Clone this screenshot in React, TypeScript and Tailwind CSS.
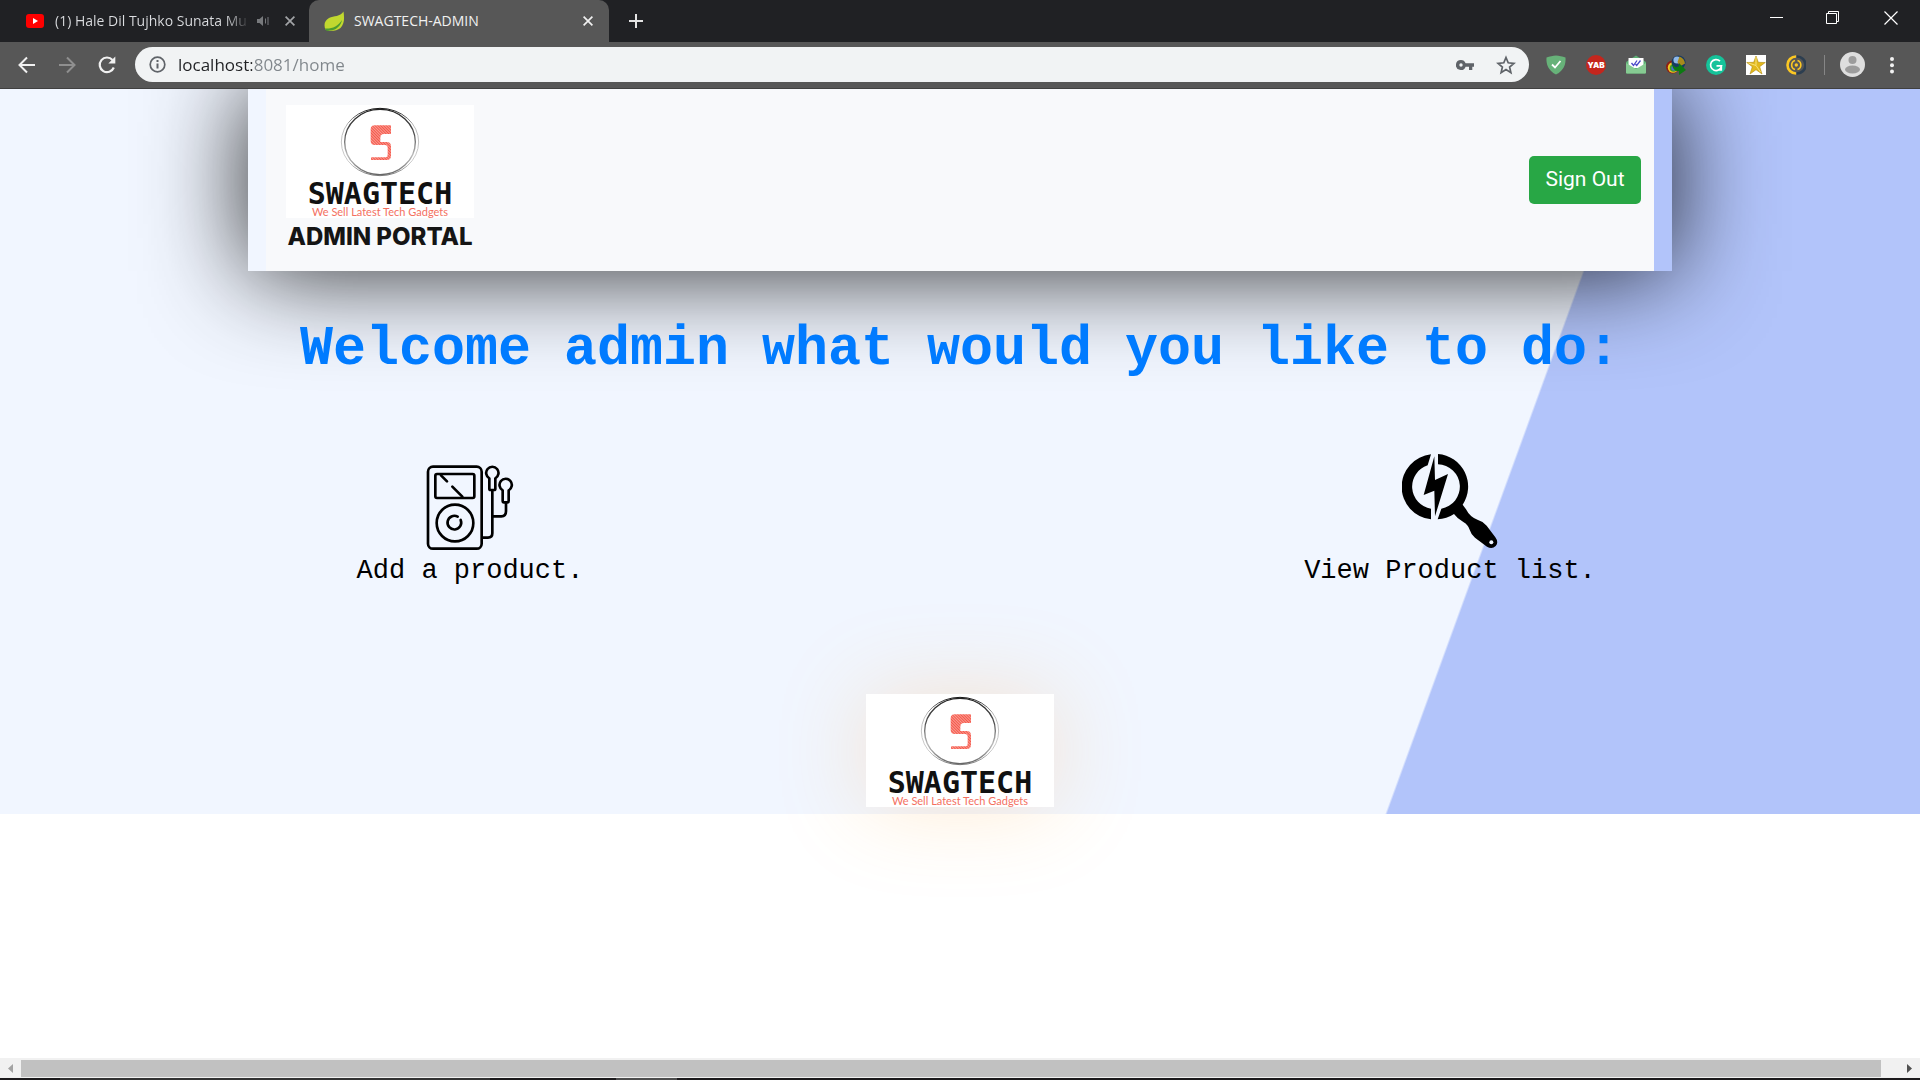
import React from "react";

function CloseIcon({ size = 10 }: { size?: number }) {
  return (
    <svg width={size} height={size} viewBox="0 0 10 10" fill="none" stroke="currentColor" strokeWidth="1.7">
      <path d="M0.6 0.6 9.4 9.4M9.4 0.6 0.6 9.4" />
    </svg>
  );
}

function TabStrip() {
  return (
    <div className="flex h-[42px] bg-[#202124] pb-px font-['Open_Sans',sans-serif] text-sm">
      <div className="flex w-[309px] items-center pl-[26px] pr-[14px]">
        <svg width="18" height="14" viewBox="0 0 18 14" className="shrink-0">
          <rect width="18" height="14" rx="3" fill="#f00" />
          <path d="M7 4v6l5-3z" fill="#fff" />
        </svg>
        <button className="ml-[11px] w-[191px] overflow-hidden whitespace-nowrap bg-[linear-gradient(90deg,#dcdee1_170px,#202124_195px)] bg-clip-text text-left text-transparent">
          (1) Hale Dil Tujhko Sunata Mu
        </button>
        <button aria-label="Mute tab" className="ml-[11px] text-[#77797c]">
          <svg width="12" height="12" viewBox="0 0 12 12" fill="none" stroke="currentColor">
            <path d="M0 4h2.5L6 1v10L2.500 8H0z" fill="currentColor" stroke="none" />
            <path d="M8.500 3.500v5M11 2v8" />
          </svg>
        </button>
        <button aria-label="Close tab" className="ml-auto text-[#a2a4a7]">
          <CloseIcon />
        </button>
      </div>
      <div className="-mb-px flex w-[300px] items-center rounded-t-[10px] bg-[#575757] pl-[15px] pr-4 text-[#f1f1f1]">
        <svg width="21" height="21" viewBox="0 0 21 21" className="shrink-0">
          <path d="M19.500 0.500C20.500 7 20.500 13 16.500 17 12 20.500 5 20.500 1.500 18.500-0.500 14 0.500 9.500 5 7 10 4.500 16 6 19.500 0.500Z" fill="#c1d82f" />
          <path d="M1 17.500C8 18 14 15.500 18 9 17 14.500 12.500 19.500 5 19.500 3.500 20.500 1.500 19.500 1 17.500Z" fill="#4c9c2e" />
        </svg>
        <button className="ml-[9px]">SWAGTECH-ADMIN</button>
        <button aria-label="Close tab" className="ml-auto">
          <CloseIcon />
        </button>
      </div>
      <button aria-label="New tab" className="ml-5 text-[#e4e4e4]">
        <svg width="14" height="14" viewBox="0 0 14 14" stroke="currentColor" strokeWidth="2">
          <path d="M7 0v14M0 7h14" />
        </svg>
      </button>
      <div className="ml-auto flex h-9 items-center pr-[22px] text-white">
        <button aria-label="Minimize" className="mr-[43px]">
          <svg width="13" height="13" viewBox="0 0 13 13" stroke="currentColor"><path d="M0 5.500h13" /></svg>
        </button>
        <button aria-label="Restore" className="mr-[44px]">
          <svg width="14" height="14" viewBox="0 0 14 14" fill="none" stroke="currentColor">
            <path d="M0.500 2.500h10v10h-10zM2.500 2.500v-2h10v10h-2" />
          </svg>
        </button>
        <button aria-label="Close window">
          <svg width="14" height="14" viewBox="0 0 14 14" stroke="currentColor" strokeWidth="1.200">
            <path d="M0.500 0.500l13 13M13.500 0.500l-13 13" />
          </svg>
        </button>
      </div>
    </div>
  );
}

function Extension({ label, children }: { label: string; children: React.ReactNode }) {
  return (
    <button aria-label={label}>
      <svg width="20" height="20" viewBox="0 0 20 20">{children}</svg>
    </button>
  );
}

function Toolbar() {
  return (
    <div className="flex h-[47px] items-center border-b border-[#404040] bg-[#575757] pb-px pl-[17px] pr-[18px]">
      <div className="flex w-[118px] shrink-0 items-center gap-5 text-[#f1f1f1]">
        <button aria-label="Back">
          <svg width="20" height="20" viewBox="0 0 20 20" fill="none" stroke="currentColor" strokeWidth="2">
            <path d="M18 10H3M10 2.500 2.500 10l7.500 7.500" />
          </svg>
        </button>
        <button aria-label="Forward" className="text-[#8f8f8f]">
          <svg width="20" height="20" viewBox="0 0 20 20" fill="none" stroke="currentColor" strokeWidth="2">
            <path d="M2 10h15M10 2.500l7.500 7.500-7.500 7.500" />
          </svg>
        </button>
        <button aria-label="Reload">
          <svg width="20" height="20" viewBox="0 0 20 20" fill="none" stroke="currentColor" strokeWidth="2.200">
            <path d="M16.800 12.500A7.300 7.300 0 1 1 15.500 5" />
            <path d="M18.300 1.500V8.500H11.300Z" fill="currentColor" stroke="none" />
          </svg>
        </button>
      </div>
      <div className="flex h-[35px] flex-1 items-center rounded-full bg-[#f1f3f4] pl-[14px] pr-[13px] text-[#5f6368]">
        <svg width="17" height="17" viewBox="0 0 17 17" fill="none" stroke="currentColor" strokeWidth="1.700" className="shrink-0">
          <circle cx="8.500" cy="8.500" r="7.300" />
          <path d="M8.500 7.500v5M8.500 4v2" strokeWidth="2" />
        </svg>
        <input
          aria-label="Address"
          defaultValue="localhost:8081/home"
          className="ml-3 min-w-0 flex-1 bg-[linear-gradient(90deg,#202124_74px,#80868b_74px)] bg-clip-text font-['Open_Sans',sans-serif] text-[17px] text-transparent outline-none"
        />
        <button aria-label="Saved passwords" className="mr-[22px]">
          <svg width="18" height="12" viewBox="0 0 18 12" fill="currentColor">
            <path fillRule="evenodd" d="M5 1a5 5 0 1 0 4.600 6.700H13V11h3.300V7.700H18V4.300H9.600A5 5 0 0 0 5 1Zm0 3.300a1.700 1.700 0 1 1 0 3.400 1.700 1.700 0 0 1 0-3.400Z" />
          </svg>
        </button>
        <button aria-label="Bookmark this page">
          <svg width="20" height="20" viewBox="0 0 20 20" fill="none" stroke="currentColor" strokeWidth="1.700">
            <path d="M10 2.500l2.200 5.300 5.700.5-4.300 3.700 1.300 5.600-4.900-3-4.900 3 1.300-5.600L2.100 8.300l5.700-.5z" />
          </svg>
        </button>
      </div>
      <div className="ml-[17px] flex items-center gap-5">
        <Extension label="Ad blocker">
          <path d="M10 0.500C13 0.800 16.500 1.500 19.500 2.500 20 9 18 15.500 10 19.500 2 15.500 0 9 0.500 2.500 3.500 1.500 7 0.800 10 0.500Z" fill="#67b279" />
          <path d="M6 9.500l3 3 5.500-6.500" fill="none" stroke="#fff" strokeWidth="1.800" />
        </Extension>
        <Extension label="YouTube ad blocker">
          <circle cx="10" cy="10" r="10" fill="#c4261d" />
          <text x="10" y="13" textAnchor="middle" fontSize="8" fontWeight="900" fontFamily="Inter, sans-serif" fill="#fff">YAB</text>
        </Extension>
        <Extension label="Mail tracker">
          <path d="M0 7l10-6.500L20 7v10.500q0 1-1 1H1q-1 0-1-1z" fill="#5db075" />
          <path d="M2.500 3h15v10h-15z" fill="#fff" />
          <path d="M0 8l10 6 10-6v9.500q0 1-1 1H1q-1 0-1-1z" fill="#86cb92" />
          <path d="M5.500 8l2 2.500L11 5.500M9.500 9l1.200 1.500L14.500 5.500" fill="none" stroke="#4a48c8" strokeWidth="1.300" />
        </Extension>
        <Extension label="Download manager">
          <circle cx="6.500" cy="12" r="6.500" fill="#8e1f14" />
          <circle cx="7" cy="12.500" r="5.200" fill="#f3c623" />
          <circle cx="7.500" cy="13" r="3.800" fill="#3f9b2b" />
          <circle cx="8" cy="13" r="2.600" fill="#4c6fd4" />
          <circle cx="12.500" cy="7.500" r="7" fill="#173a63" />
          <circle cx="11" cy="5" r="3.600" fill="#8fb8e8" />
          <path d="M13.500 1.500q5 2 5.500 7l-5 3-2.500-4.500z" fill="#a88a1c" />
          <path d="M6 9q3 5 7 2V8l7 7-7 5v-4q-6 1-7-7Z" fill="#0c7a12" />
        </Extension>
        <Extension label="Grammar checker">
          <circle cx="10" cy="10" r="10" fill="#15c39a" />
          <path d="M14 6.200A5.500 5.500 0 1 0 15.500 10.800H10.500M15.300 10.500v4.300h-3.500" fill="none" stroke="#fff" strokeWidth="1.700" />
        </Extension>
        <Extension label="Favourites">
          <path d="M0 0h20v20H0z" fill="#fff" />
          <path d="M10 1l2.300 6.300 7 .2-5.600 4.200L16 19l-6-4.300L4 19l2.300-7.300L0.700 7.500l7-.2z" fill="#e3b91c" stroke="#b08c10" strokeWidth="0.600" />
          <path d="M10 2v8.500L14.500 17M10 10.500L2.500 8" stroke="#f7e27a" fill="none" />
        </Extension>
        <Extension label="Password manager">
          <path d="M10 1.500a8.500 8.500 0 1 0 0 17" fill="none" stroke="#fbc723" strokeWidth="2.600" />
          <path d="M11 1.500a8.500 8.500 0 0 1 0 17" fill="none" stroke="#2c3e50" strokeWidth="2.600" />
          <path d="M9 5.500a4.700 4.700 0 0 0 0 9M11.500 5.500a4.700 4.700 0 0 1 0 9" fill="none" stroke="#fbc723" strokeWidth="1.600" />
          <circle cx="10.300" cy="10" r="1.700" fill="#fbc723" />
        </Extension>
      </div>
      <div className="ml-[18px] h-5 w-px bg-[#868686]" />
      <button aria-label="Profile" className="ml-[15px]">
        <svg width="25" height="25" viewBox="0 0 25 25">
          <circle cx="12.500" cy="12.500" r="12.500" fill="#dedede" />
          <circle cx="12.500" cy="8" r="4" fill="#9c9c9c" />
          <ellipse cx="12.500" cy="17.500" rx="7.500" ry="4" fill="#9c9c9c" />
        </svg>
      </button>
      <button aria-label="Menu" className="ml-[17px]">
        <svg width="20" height="20" viewBox="0 0 20 20" fill="#f1f1f1">
          <circle cx="10" cy="4" r="2" />
          <circle cx="10" cy="10.300" r="2" />
          <circle cx="10" cy="16.600" r="2" />
        </svg>
      </button>
    </div>
  );
}

function Logo({ id, className = "" }: { id: string; className?: string }) {
  return (
    <div className={"flex h-[113px] w-[188px] flex-col items-center bg-white " + className}>
      <svg width="80" height="70" viewBox="298 82 240 210" className="mt-[2px] shrink-0">
        <defs>
          <pattern id={id + "-hatch"} width="6" height="6" patternUnits="userSpaceOnUse" patternTransform="rotate(-45)">
            <rect width="6" height="6" fill="#fcaaa0" />
            <rect width="3.500" height="6" fill="#f4564a" />
          </pattern>
          <linearGradient id={id + "-outer"} x1="0" y1="0" x2="0" y2="1">
            <stop offset="0" stopColor="#111" />
            <stop offset="0.250" stopColor="#bbb" />
            <stop offset="0.800" stopColor="#ccc" />
            <stop offset="1" stopColor="#777" />
          </linearGradient>
          <linearGradient id={id + "-inner"} x1="0" y1="0" x2="0" y2="1">
            <stop offset="0" stopColor="#222" />
            <stop offset="0.400" stopColor="#555" />
            <stop offset="0.700" stopColor="#bbb" />
            <stop offset="1" stopColor="#666" />
          </linearGradient>
        </defs>
        <ellipse cx="418" cy="187" rx="116" ry="101" fill="none" stroke={`url(#${id}-outer)`} strokeWidth="3" />
        <ellipse cx="418" cy="187" rx="106" ry="98" fill="none" stroke={`url(#${id}-inner)`} strokeWidth="4" />
        <path
          d="M402 137H451V163H430Q419 163 419 175V187H438Q451 187 451 200V228Q451 241 438 241H391V233H434Q441 233 441 226V204Q441 196 433 196H402Q390 196 390 184V149Q390 137 402 137Z"
          fill={`url(#${id}-hatch)`}
        />
      </svg>
      <span className="mt-1 font-['DejaVu_Sans_Mono',monospace] text-[30px] font-bold leading-[26px] text-[#111]">SWAGTECH</span>
      <span className="font-[Lato,sans-serif] text-[11px] leading-[9px] text-[#f4705f]">We Sell Latest Tech Gadgets</span>
    </div>
  );
}

function PlayerIcon() {
  return (
    <svg width="90" height="86" viewBox="256 74 270 258" fill="none" stroke="#000" strokeWidth="8" strokeLinecap="round" strokeLinejoin="round">
      <rect x="265" y="82" width="161" height="246" rx="15" />
      <rect x="287" y="104" width="117" height="72" rx="5" />
      <path d="M304 108 322 126M338 142 368 172" />
      <circle cx="346" cy="251" r="55" />
      <path d="M354 232A20.500 20.500 0 1 0 363 242" />
      <path d="M449 117A18.500 18.500 0 1 1 467 117V148Q467 152 463 152H453Q449 152 449 148ZM489 153A18.500 18.500 0 1 1 507 153V184Q507 189 503 189H493Q489 189 489 184Z" />
      <path d="M458 153V282Q458 295 445 295H430M499 190V216Q499 231 485 231H461" />
    </svg>
  );
}

function SearchIcon() {
  return (
    <svg width="97" height="97" viewBox="334 38 291 291">
      <path d="M421 42A98 98 0 0 0 421 237V205A67 67 0 0 1 411 75ZM442 41A98 98 0 0 1 516 193L526 207Q538 231 562 239 577 243 588 256L614 291Q625 306 615 317 604 328 589 319L553 292Q542 284 537 268 533 254 518 245 499 234 490 221 468 236 441 237L452 205A67 67 0 0 0 442 72Z" />
      <path d="M431 48 399 164 431 151 433 228 472 101 433 119Z" />
      <circle cx="602" cy="306" r="6" fill="#f1f6ff" />
    </svg>
  );
}

function Choice({ label, children }: { label: string; children: React.ReactNode }) {
  return (
    <a href="#" className="flex w-[444px] flex-col items-center font-['Liberation_Mono',monospace] text-[27px] leading-[42px] text-black">
      <span className="flex h-[101px] items-end">{children}</span>
      {label}
    </a>
  );
}

function HomePage() {
  return (
    <main className="flex-1 overflow-hidden bg-white">
      <div className="bg-[linear-gradient(110deg,#f1f6ff_75.5%,#b2c4fa_75.6%)] px-[248px] pb-[7px]">
        <header className="bg-[linear-gradient(90deg,#f1f6ff_50%,#b2c4fa_50%)] px-[18px] shadow-[0_0_100px_rgba(0,0,0,0.85)]">
          <nav className="flex h-[182px] items-center justify-between bg-[#f8f9fb] pl-5 pr-[13px]">
            <div className="flex flex-col items-center">
              <Logo id="top" />
              <span className="font-[Inter,sans-serif] text-2xl font-extrabold leading-[38px] text-[#151515]">ADMIN PORTAL</span>
            </div>
            <button className="h-12 w-28 rounded-[5px] bg-[#28a745] font-[Roboto,sans-serif] text-[21px] text-white">Sign Out</button>
          </nav>
        </header>
        <h1 className="relative mt-[43px] whitespace-nowrap text-center font-['Liberation_Mono',monospace] text-[55px] font-bold leading-[72px] text-[#007bff]">
          Welcome admin what would you like to do:
        </h1>
        <div className="mt-[63px] flex justify-between">
          <Choice label="Add a product."><PlayerIcon /></Choice>
          <Choice label="View Product list."><SearchIcon /></Choice>
        </div>
        <Logo id="bottom" className="mx-auto mt-[102px] shadow-[0_0_90px_rgba(255,165,50,0.22)]" />
      </div>
    </main>
  );
}

function ScrollBar() {
  return (
    <div className="flex h-5 items-center bg-[#f1f1f1]">
      <button aria-label="Scroll left" className="flex w-[21px] justify-center">
        <svg width="5" height="9" viewBox="0 0 5 9" fill="#a3a3a3"><path d="M5 0v9L0 4.500z" /></svg>
      </button>
      <div className="mr-[18px] h-[17px] flex-1 bg-[#c1c1c1]" />
      <button aria-label="Scroll right" className="flex w-[21px] justify-center">
        <svg width="5" height="9" viewBox="0 0 5 9" fill="#505050"><path d="M0 0v9L5 4.500z" /></svg>
      </button>
    </div>
  );
}

export default function App() {
  return (
    <div className="flex h-screen min-h-[900px] flex-col overflow-hidden">
      <div className="relative z-10">
        <TabStrip />
        <Toolbar />
      </div>
      <HomePage />
      <ScrollBar />
      <div className="flex h-[2px] bg-[#1c1a1c]">
        <div className="ml-[60px] w-[430px] bg-[#333]" />
        <div className="ml-[126px] w-[61px] bg-[#4d4d4d]" />
      </div>
    </div>
  );
}
